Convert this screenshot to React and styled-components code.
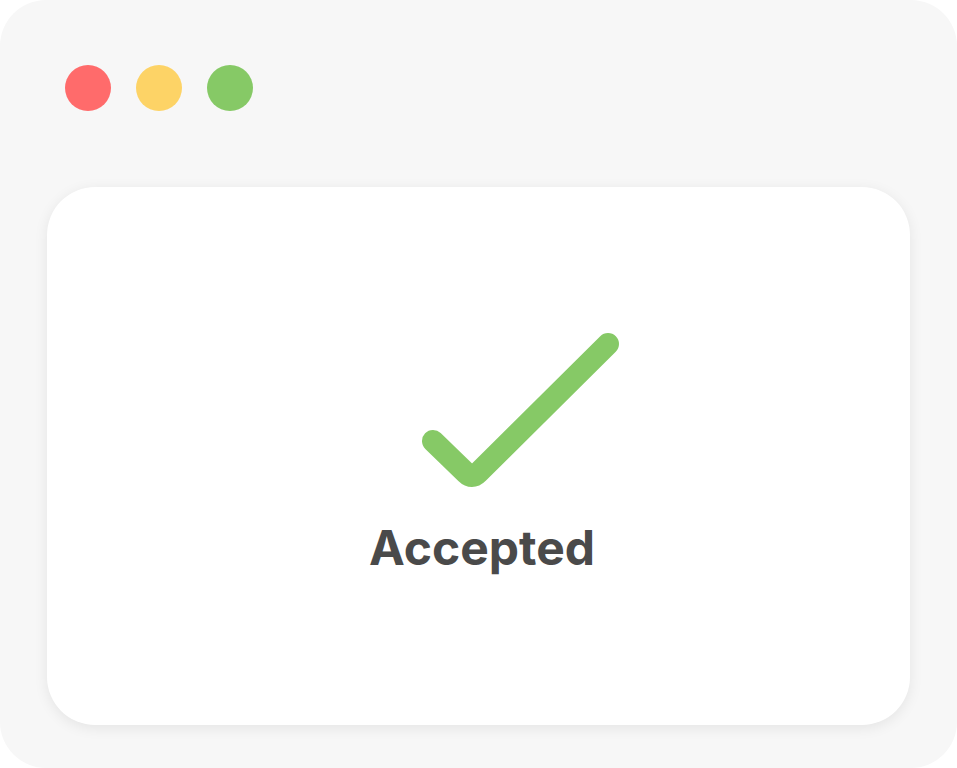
import React from 'react';
import styled, {createGlobalStyle} from 'styled-components';

const GlobalStyle = createGlobalStyle`
    html, body {
        margin: 0;
        padding: 0;
        background: #ffffff;
    }
    body {
        font-family: Inter, "Noto Sans", "Liberation Sans", sans-serif;
    }
`;

const Window = styled.div`
    width: 957px;
    height: 768px;
    box-sizing: border-box;
    background-color: #f7f7f7;
    border-radius: 46px;
    padding: 65px 47px 43px 47px;
    display: flex;
    flex-direction: column;
    gap: 76px;
`;

const TitleBar = styled.div`
    display: flex;
    gap: 25px;
    padding-left: 18px;
`;

const Dot = styled.span`
    width: 46px;
    height: 46px;
    border-radius: 50%;
    background-color: ${props => props.color};
`;

const Card = styled.div`
    flex: 1;
    background-color: #ffffff;
    border-radius: 48px;
    box-shadow: 0 3px 14px rgba(0, 0, 0, 0.08);
    display: flex;
    flex-direction: column;
    align-items: center;
    justify-content: center;
    gap: 32px;
    padding: 0 0 8px 7px;
`;

const Label = styled.div`
    font-size: 48px;
    line-height: 48px;
    font-weight: 700;
    color: #4a4a4a;
`;

function CheckIcon() {
    return (
        <svg width="280" height="160" viewBox="0 0 280 160">
            <path
                d="M91 109 L124 141 Q130 147 136 141 L266 12"
                fill="none"
                stroke="#86c966"
                strokeWidth="22"
                strokeLinecap="round"
                strokeLinejoin="round"
            />
        </svg>
    );
}

function App() {
    return (<>
        <GlobalStyle/>
        <Window>
            <TitleBar>
                <Dot color="#ff6b6b"/>
                <Dot color="#fdd366"/>
                <Dot color="#86c966"/>
            </TitleBar>
            <Card>
                <CheckIcon/>
                <Label>Accepted</Label>
            </Card>
        </Window>
    </>);
}

export default App;
